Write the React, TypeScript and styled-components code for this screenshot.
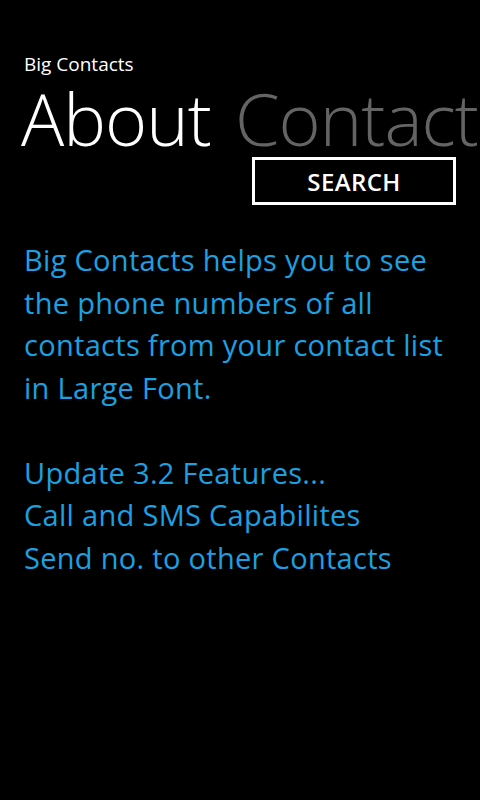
import React from "react";
import styled, { createGlobalStyle } from "styled-components";

const Global = createGlobalStyle`
  html, body { margin: 0; padding: 0; background: #000; }
  body { width: 480px; height: 800px; overflow: hidden; font-family: "Open Sans", "Noto Sans", sans-serif; }
`;

const Screen = styled.div`
  width: 480px;
  height: 800px;
  background: #000;
  overflow: hidden;
  display: flex;
  flex-direction: column;
  padding: 52px 0 0 24px;
  box-sizing: border-box;
`;

const AppTitle = styled.div`
  color: #fff;
  font-size: 19px;
  line-height: 24px;
  font-weight: 400;
`;

const Headers = styled.div`
  display: flex;
  gap: 24px;
  white-space: nowrap;
  margin-top: 6px;
  margin-left: -3px;
`;

const Header = styled.div<{ $active?: boolean }>`
  font-size: 72px;
  line-height: 72px;
  font-weight: 300;
  letter-spacing: -1px;
  color: ${(p) => (p.$active ? "#fff" : "#646464")};
`;

const ButtonRow = styled.div`
  display: flex;
  justify-content: flex-end;
  padding-right: 24px;
  margin-top: 3px;
`;

const SearchButton = styled.button`
  width: 204px;
  height: 48px;
  border: 3px solid #fff;
  background: transparent;
  color: #fff;
  font-family: "Open Sans", sans-serif;
  font-weight: 600;
  font-size: 24px;
  letter-spacing: 0.4px;
  padding: 0;
  box-sizing: border-box;
`;

const Body = styled.div`
  margin-top: 34px;
  color: #1ba1e2;
  font-size: 29px;
  line-height: 42.5px;
  letter-spacing: 0.3px;
  font-weight: 400;
`;

const Para = styled.p`
  margin: 0 0 42.5px 0;
`;

const Line = styled.div``;

export default function App() {
  return (
    <>
      <Global />
      <Screen>
        <AppTitle>Big Contacts</AppTitle>
        <Headers>
          <Header $active>About</Header>
          <Header>Contacts</Header>
        </Headers>
        <ButtonRow>
          <SearchButton>SEARCH</SearchButton>
        </ButtonRow>
        <Body>
          <Para>
            Big Contacts helps you to see
            <br />
            the phone numbers of all
            <br />
            contacts from your contact list
            <br />
            in Large Font.
          </Para>
          <Line>Update 3.2 Features...</Line>
          <Line>Call and SMS Capabilites</Line>
          <Line>Send no. to other Contacts</Line>
        </Body>
      </Screen>
    </>
  );
}
